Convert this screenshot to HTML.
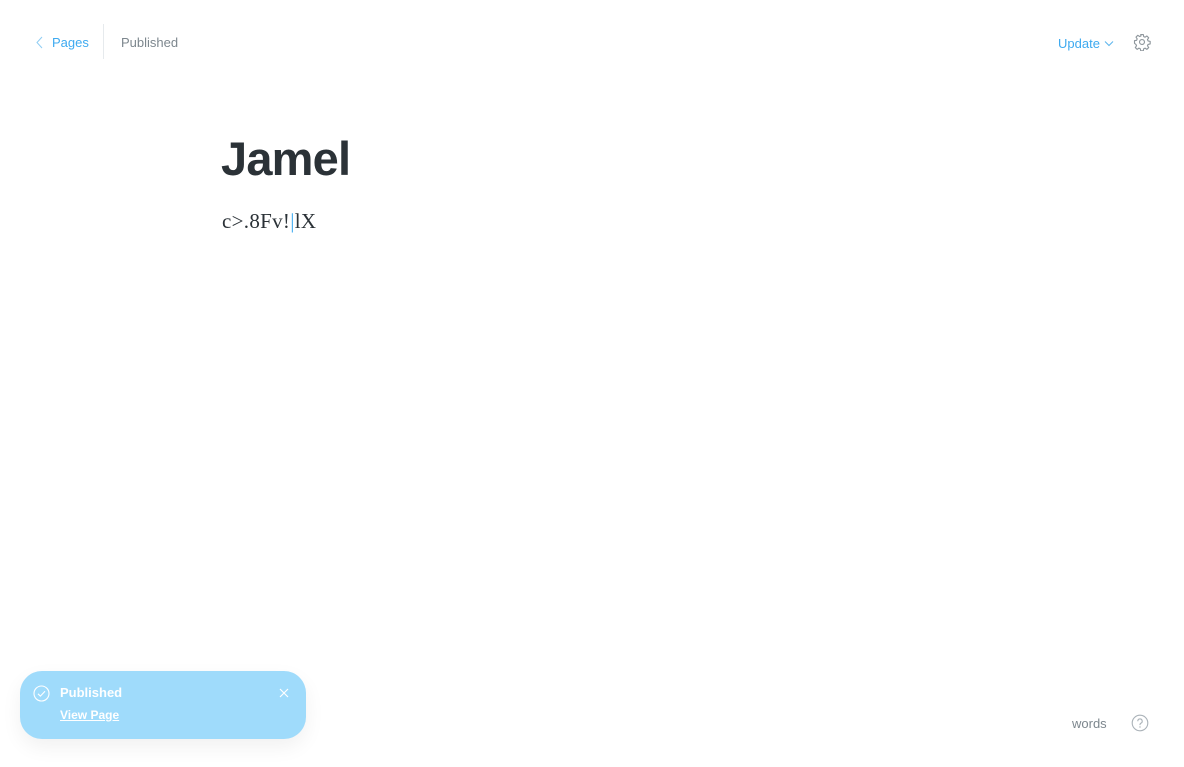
<!DOCTYPE html>
<html><head><meta charset="utf-8"><style>
html,body{margin:0;padding:0;width:1184px;height:767px;background:#fff;overflow:hidden;font-family:"Liberation Sans",sans-serif;position:relative}
.abs{position:absolute}
</style></head><body>
<svg class="abs" style="left:35px;top:36px" width="9" height="13" viewBox="0 0 9 13"><path d="M7 1L2 6.5L7 12" fill="none" stroke="#8fcdf3" stroke-width="1"/></svg>
<div class="abs" style="left:52px;top:35px;font-size:13px;color:#3eaaf0">Pages</div>
<div class="abs" style="left:103px;top:24px;width:1px;height:35px;background:#e6eaed"></div>
<div class="abs" style="left:121px;top:35px;font-size:13px;color:#7d878e">Published</div>
<div class="abs" style="left:1058px;top:36px;font-size:13px;color:#3eaaf0">Update</div>
<svg class="abs" style="left:1104px;top:40px" width="10" height="7" viewBox="0 0 10 7"><path d="M1 1.5L5 5.5L9 1.5" fill="none" stroke="#5ab4ec" stroke-width="1"/></svg>
<svg class="abs" style="left:1133px;top:33px" width="18" height="18" viewBox="0 0 24 24"><path d="M10.3 2h3.4l.6 2.8 1.8.8 2.4-1.6 2.4 2.4-1.6 2.4.8 1.8 2.8.6v3.4l-2.8.6-.8 1.8 1.6 2.4-2.4 2.4-2.4-1.6-1.8.8-.6 2.8h-3.4l-.6-2.8-1.8-.8-2.4 1.6-2.4-2.4 1.6-2.4-.8-1.8L2 13.7v-3.4l2.8-.6.8-1.8L4 5.5 6.4 3.1l2.4 1.6 1.8-.8z" fill="none" stroke="#8e969c" stroke-width="1.5" stroke-linejoin="round"/><circle cx="12" cy="12" r="3.3" fill="none" stroke="#8e969c" stroke-width="1.5"/></svg>
<div class="abs" style="left:221px;top:131px;font-size:47px;font-weight:bold;color:#2b3237;letter-spacing:-0.8px">Jamel</div>
<div class="abs" style="left:222px;top:209px;font-family:'Liberation Serif',serif;font-size:21px;color:#2b3237;letter-spacing:0.3px">c&gt;.8Fv!<span style="color:#3eaaf0">|</span>lX</div>
<div class="abs" style="left:20px;top:671px;width:286px;height:68px;border-radius:22px;background:#9fdbfb;box-shadow:0 8px 20px rgba(0,0,0,0.06)"></div>
<svg class="abs" style="left:33px;top:685px" width="17" height="17" viewBox="0 0 17 17"><circle cx="8.5" cy="8.5" r="7.5" fill="none" stroke="#fff" stroke-width="1.1"/><path d="M5 8.8l2.4 2.3 4.6-4.8" fill="none" stroke="#fff" stroke-width="1.1"/></svg>
<div class="abs" style="left:60px;top:685px;font-size:13px;font-weight:bold;color:#fff">Published</div>
<div class="abs" style="left:60px;top:708px;font-size:12px;font-weight:bold;color:#fff;text-decoration:underline">View Page</div>
<svg class="abs" style="left:279px;top:688px" width="10" height="10" viewBox="0 0 10 10"><path d="M1 1L9 9M9 1L1 9" stroke="#fff" stroke-width="1.2"/></svg>
<div class="abs" style="left:1072px;top:716px;font-size:13px;color:#7d878e">words</div>
<svg class="abs" style="left:1131px;top:714px" width="18" height="18" viewBox="0 0 18 18"><circle cx="9" cy="9" r="7.8" fill="none" stroke="#aab2b8" stroke-width="1.1"/><path d="M6.8 7.2a2.2 2.2 0 1 1 3 2c-.6.3-.8.7-.8 1.3v.6" fill="none" stroke="#aab2b8" stroke-width="1.1"/><circle cx="9" cy="13" r=".7" fill="#aab2b8"/></svg>
</body></html>
